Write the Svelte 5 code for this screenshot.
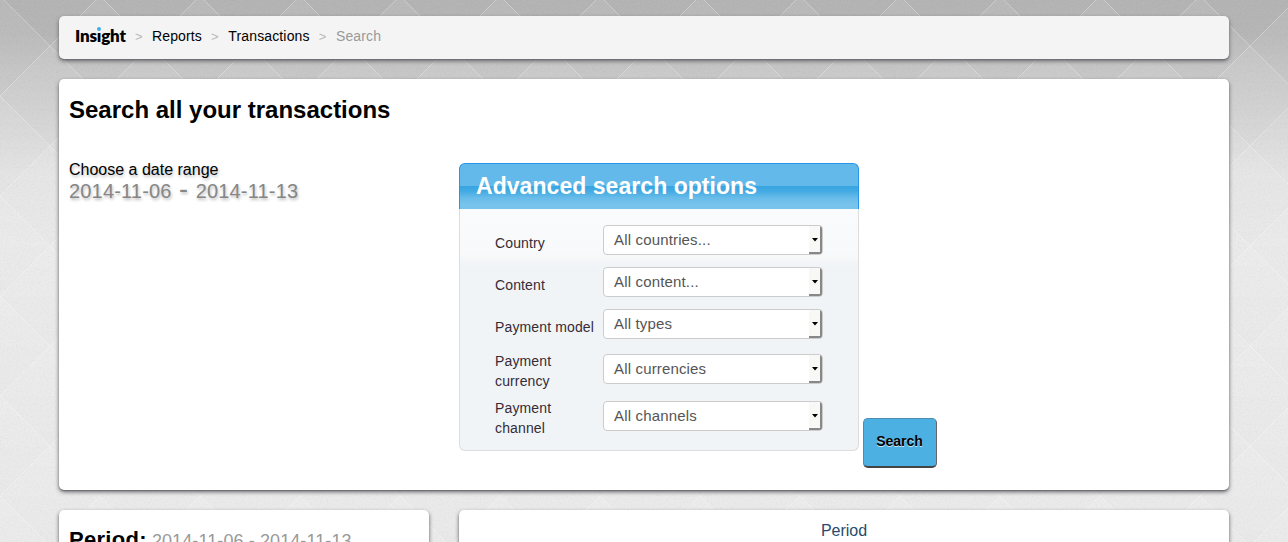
<script>
  const filters = [
    { label: 'Country', value: 'All countries...', height: 42 },
    { label: 'Content', value: 'All content...', height: 42 },
    { label: 'Payment model', value: 'All types', height: 42 },
    { label: 'Payment currency', value: 'All currencies', height: 47 },
    { label: 'Payment channel', value: 'All channels', height: 47 }
  ];
</script>

<svg class="backdrop" width="1288" height="542" aria-hidden="true">
  <defs>
    <linearGradient id="shade" x1="0" y1="0" x2="0" y2="1">
      <stop offset="0" stop-color="#afafaf" />
      <stop offset="0.06" stop-color="#b5b5b5" />
      <stop offset="0.13" stop-color="#c4c4c4" />
      <stop offset="0.22" stop-color="#d3d3d3" />
      <stop offset="0.32" stop-color="#e3e3e3" />
      <stop offset="0.45" stop-color="#e9e9e9" />
      <stop offset="1" stop-color="#e9e9e9" />
    </linearGradient>
    <linearGradient id="facet" x1="0" y1="0" x2="0" y2="1">
      <stop offset="0" stop-color="#fff" stop-opacity=".14" />
      <stop offset="1" stop-color="#fff" stop-opacity="0" />
    </linearGradient>
    <pattern id="diamonds" width="100" height="100" y="-4" patternUnits="userSpaceOnUse">
      <path d="M0 0L50 50L0 100L-50 50Z" fill="url(#facet)" />
      <path d="M100 0L150 50L100 100L50 50Z" fill="url(#facet)" />
      <path d="M50 50L100 100L50 150L0 100Z" fill="url(#facet)" />
      <path d="M50 -50L100 0L50 50L0 0Z" fill="url(#facet)" />
      <path d="M0 0L100 100M100 0L0 100" stroke="#fff" stroke-opacity=".3" stroke-width="1" />
    </pattern>
    <filter id="grain">
      <feTurbulence type="fractalNoise" baseFrequency=".55" numOctaves="2" />
      <feColorMatrix values="0 0 0 0 0  0 0 0 0 0  0 0 0 0 0  .07 0 0 0 -.03" />
    </filter>
  </defs>
  <rect width="1288" height="542" fill="url(#shade)" />
  <rect width="1288" height="542" fill="url(#diamonds)" />
  <rect width="1288" height="542" filter="url(#grain)" />
</svg>

<div class="page">
  <nav class="panel crumbs">
    <span class="logo">Ins<span class="i">ı<i></i></span>ght</span>
    <span class="sep">&gt;</span><a href="#reports">Reports</a>
    <span class="sep">&gt;</span><a href="#transactions">Transactions</a>
    <span class="sep">&gt;</span><span class="current">Search</span>
  </nav>

  <main class="panel search">
    <h1>Search all your transactions</h1>
    <div class="columns">
      <div class="dates">
        <div class="choose">Choose a date range</div>
        <div class="range"><span>2014-11-06</span><b>-</b><span>2014-11-13</span></div>
      </div>
      <section class="advanced">
        <h2>Advanced search options</h2>
        <div class="fields">
          {#each filters as f}
            <div class="row" style:height="{f.height}px">
              <span class="label">{f.label}</span>
              <div class="select">
                <span>{f.value}</span>
                <span class="drop"><svg width="6" height="4"><path d="M0 0H6L3 3.6Z" /></svg></span>
              </div>
            </div>
          {/each}
        </div>
      </section>
      <button>Search</button>
    </div>
  </main>

  <div class="results">
    <section class="panel period"><strong>Period:</strong><span>2014-11-06 - 2014-11-13</span></section>
    <section class="panel chart">Period</section>
  </div>
</div>

<style>
  :global(body) { margin: 0; background: #e8e8e8; }
  .backdrop { position: absolute; left: 0; top: 0; display: block; }
  .page {
    position: relative;
    box-sizing: border-box;
    width: 1288px;
    height: 542px;
    overflow: hidden;
    padding: 16px 59px 0;
    font-family: "Liberation Sans", Arial, sans-serif;
    color: #000;
  }
  .panel {
    box-sizing: border-box;
    background: #fff;
    border-radius: 5px;
    box-shadow: 0 2px 4px #66666b, 0 1px 1px #88888c;
  }
  .crumbs {
    display: flex;
    align-items: center;
    height: 43px;
    padding: 0 16px 3px;
    background: #f4f4f4;
    font-size: 14px;
    letter-spacing: .14px;
  }
  .crumbs a { color: #000; text-decoration: none; }
  .logo {
    width: 51px;
    white-space: nowrap;
    font: 800 17px/20px Lato, "Liberation Sans", sans-serif;
    letter-spacing: -.2px;
  }
  .i { position: relative; }
  .i i {
    position: absolute;
    left: 0;
    top: 2px;
    width: 4px;
    height: 4px;
    border-radius: 50%;
    background: #43ade3;
  }
  .sep { width: 8px; margin: 0 9px; color: #b9b9b9; font-size: 13px; }
  .sep ~ .sep { margin-right: 9.3px; }
  .current { color: #999; }
  .search { height: 411px; margin-top: 20px; padding: 17px 10px 0; }
  h1 { margin: 0; font-size: 24px; line-height: 28px; }
  .columns { display: flex; align-items: flex-start; margin-top: 39px; }
  .dates { width: 390px; text-shadow: 1px 2px 3px #bbb; }
  .choose { font-size: 16px; line-height: 14px; }
  .range { display: flex; color: #868686; font-size: 20px; line-height: 28px; letter-spacing: .18px; }
  .range b { width: 24px; text-align: center; font-weight: normal; font-size: 27px; line-height: 24px; }
  .advanced { width: 400px; }
  h2 {
    box-sizing: border-box;
    height: 46px;
    margin: 0;
    padding: 0 16px;
    border: 1px solid #2694e8;
    border-bottom: 0;
    border-radius: 6px 6px 0 0;
    background: linear-gradient(#63b9e9 0, #63b9e9 22px, #37a5e1 22px, #42aae3 27px, #68bce9 34px, #77c3eb 40px, #77c3eb);
    color: #fff;
    font-size: 23px;
    line-height: 45px;
    letter-spacing: .05px;
    white-space: nowrap;
  }
  .fields {
    box-sizing: border-box;
    height: 242px;
    padding: 10px 35px 0;
    border: 1px solid #ddd;
    border-top: 0;
    border-radius: 0 0 6px 6px;
    background: linear-gradient(#fafbfd 0, #f8f9fa 45px, #f0f4f7 58px);
  }
  .row { display: flex; align-items: center; }
  .label {
    box-sizing: border-box;
    width: 108px;
    padding: 5px 6px 0 0;
    color: #362b36;
    font-size: 14px;
    line-height: 20px;
    letter-spacing: .13px;
  }
  .select {
    display: flex;
    flex: none;
    box-sizing: border-box;
    justify-content: space-between;
    width: 220px;
    height: 30px;
    padding-left: 10px;
    border: 1px solid #ccc;
    border-radius: 4px;
    background: #fff;
    color: #555;
    font-size: 15px;
    line-height: 28px;
    letter-spacing: .16px;
    overflow: hidden;
  }
  .drop {
    display: flex;
    align-items: center;
    justify-content: center;
    box-sizing: border-box;
    width: 13px;
    padding: 2px 0 0 1px;
    border-right: 2px solid #888;
    border-bottom: 2px solid #888;
    background: #f8f8f6;
  }
  button {
    width: 74px;
    height: 50px;
    margin: 255px 0 0 4px;
    padding: 0 1px 4px 0;
    border: 1px solid #4d8eb0;
    border-right-color: #666;
    border-bottom: 2px solid #444;
    border-radius: 5px;
    background: #4db0e3;
    font: bold 14px "Liberation Sans", sans-serif;
    text-shadow: 0 1px 0 #c8e8f8;
  }
  .results { display: flex; gap: 30px; margin-top: 20px; }
  .period { width: 370px; height: 60px; padding: 17px 10px; display: flex; align-items: baseline; gap: 5px; white-space: nowrap; }
  .period strong { font-size: 22px; line-height: 26px; letter-spacing: .3px; }
  .period span { color: #999; font-size: 18px; letter-spacing: .1px; }
  .chart { width: 770px; height: 60px; padding-top: 11px; text-align: center; color: #274b6d; font-size: 16px; line-height: 20px; }
</style>
